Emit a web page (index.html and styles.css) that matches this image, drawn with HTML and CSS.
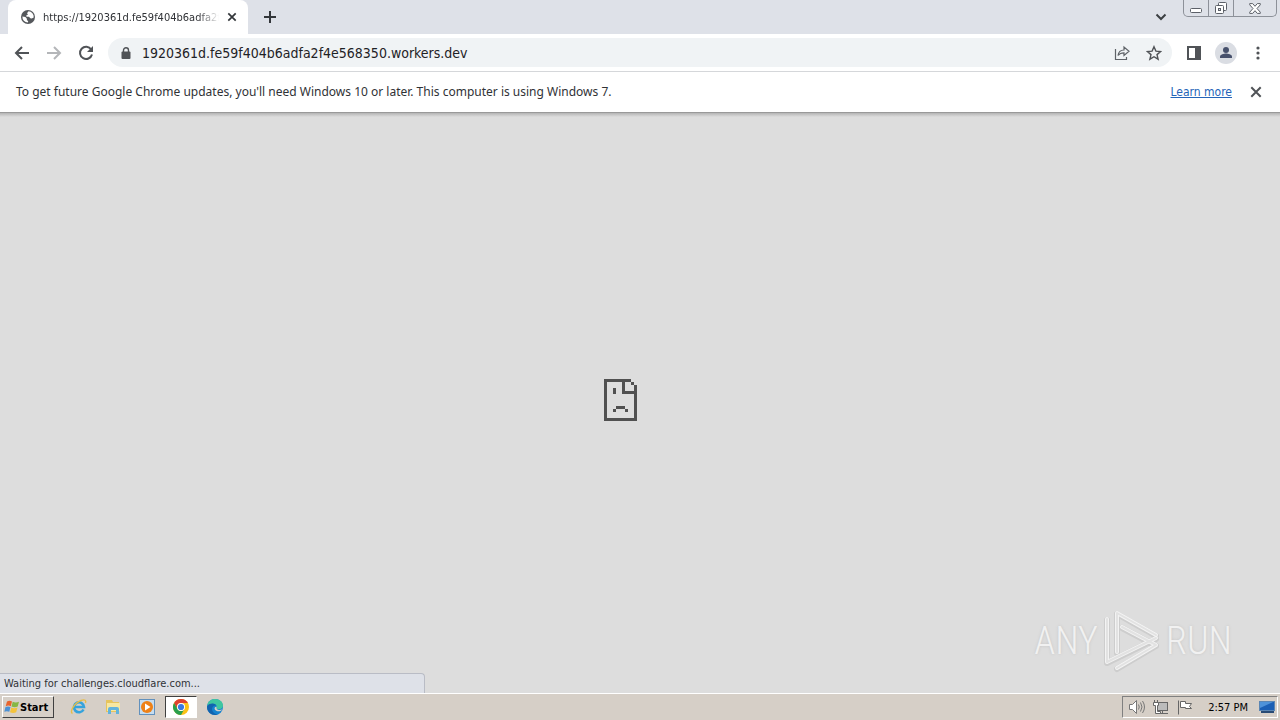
FILE: index.html
```html
<!DOCTYPE html>
<html lang="en">
<head>
<meta charset="utf-8">
<meta name="viewport" content="width=device-width, initial-scale=1">
<title>https://1920361d.fe59f404b6adfa2f4e568350.workers.dev</title>
<link rel="stylesheet" href="styles.css">
</head>
<body>
<div class="browser">
  <header class="tabstrip">
    <div class="tab">
      <svg class="globe" width="14" height="14" viewBox="0 0 14 14"><circle cx="7" cy="7" r="7" fill="#55585c"/><path d="M7.5 1.3 6 3.2l1 1.3-1.800 1 .3 1.300H8l1.300 1.400 1.500.2 1.900-.8A5.700 5.700 0 0 0 7.500 1.300zM1.400 6.500l3 .6 1.500 1.700v1.400l1.300.8-.3 1.600A5.700 5.700 0 0 1 1.400 6.500z" fill="#fff"/></svg>
      <span class="tab-title">https://1920361d.fe59f404b6adfa2f</span>
      <button class="icon-btn tab-close" aria-label="Close tab"><svg width="10" height="10" viewBox="0 0 10 10"><path d="M1.300 1.300l7.400 7.400M8.700 1.300 1.300 8.700" stroke="#33363a" stroke-width="1.700"/></svg></button>
    </div>
    <button class="icon-btn new-tab" aria-label="New tab"><svg width="12" height="12" viewBox="0 0 12 12"><path d="M6 0v12M0 6h12" stroke="#33363a" stroke-width="2"/></svg></button>
    <button class="icon-btn tab-search" aria-label="Search tabs"><svg width="12" height="8" viewBox="0 0 12 8"><path d="M1.500 1.500 6 6l4.500-4.500" fill="none" stroke="#3c4043" stroke-width="2"/></svg></button>
    <div class="caption">
      <button class="icon-btn cap-min" aria-label="Minimize"><svg width="12" height="5" viewBox="0 0 12 5"><rect x=".5" y=".5" width="11" height="4" rx="1" fill="#fff" stroke="#5c6068"/></svg></button>
      <button class="icon-btn cap-max" aria-label="Restore"><svg width="14" height="14" viewBox="0 0 14 14" stroke="#5c6068"><rect x="4.500" y="1.500" width="8" height="8" rx="1" fill="#fff"/><rect x="1.500" y="4.500" width="8" height="8" rx="1" fill="#fff"/><rect x="4.500" y="7.500" width="2" height="2" fill="#dee1e8"/></svg></button>
      <button class="icon-btn cap-close" aria-label="Close"><svg width="12" height="11" viewBox="0 0 12 11"><path d="M.7.600h3L6 3.300 8.300.600h3v1.200L8 5.500l3.300 3.700v1.200h-3L6 7.700l-2.300 2.700h-3V9.200L4 5.500.700 1.800z" fill="#fff" stroke="#5c6068"/></svg></button>
    </div>
  </header>

  <nav class="toolbar">
    <button class="icon-btn nav-btn" aria-label="Back"><svg width="16" height="16" viewBox="0 0 16 16"><path d="M15 8H2.500M8 2 2 8l6 6" fill="none" stroke="#505357" stroke-width="2"/></svg></button>
    <button class="icon-btn nav-btn" aria-label="Forward" disabled><svg width="16" height="16" viewBox="0 0 16 16"><path d="M1 8h12.500M8 2l6 6-6 6" fill="none" stroke="#b4b6b9" stroke-width="2"/></svg></button>
    <button class="icon-btn nav-btn" aria-label="Reload"><svg width="16" height="16" viewBox="0 0 16 16"><path d="M13.200 4.500A6.100 6.100 0 1 0 14 9.500" fill="none" stroke="#505357" stroke-width="2"/><path d="M15 1v6H9z" fill="#505357"/></svg></button>
    <div class="omnibox">
      <svg class="lock" width="10" height="12" viewBox="0 0 10 12"><path d="M2.500 5V3.300a2.500 2.500 0 0 1 5 0V5" fill="none" stroke="#505357" stroke-width="1.400"/><rect x=".5" y="4.500" width="9" height="7.500" rx="1" fill="#505357"/></svg>
      <input class="url" type="text" aria-label="Address" value="1920361d.fe59f404b6adfa2f4e568350.workers.dev">
      <button class="icon-btn nav-btn" aria-label="Share"><svg width="16" height="16" viewBox="0 0 16 16" fill="none" stroke="#5f6368" stroke-width="1.200"><path d="M1.500 4v10.500h11V12"/><path d="M4 10.500C4.500 7 6.500 5 10 5V2l5 4.300-5 4.200V7.800C7.500 7.800 5.500 8.500 4 10.500z"/></svg></button>
      <button class="icon-btn nav-btn" aria-label="Bookmark"><svg width="16" height="16" viewBox="0 0 16 16"><path d="m8 1.700 1.900 4.400 4.700.4L11 9.600l1.100 4.600L8 11.700l-4.100 2.500L5 9.600 1.400 6.500l4.700-.4z" fill="none" stroke="#505357" stroke-width="1.400"/></svg></button>
    </div>
    <button class="icon-btn nav-btn" aria-label="Side panel"><svg width="14" height="14" viewBox="0 0 14 14"><rect x="1" y="1" width="12" height="12" fill="none" stroke="#505357" stroke-width="2"/><path d="M8 0h6v14H8z" fill="#505357"/></svg></button>
    <button class="icon-btn nav-btn" aria-label="Profile"><svg width="22" height="22" viewBox="0 0 22 22"><circle cx="11" cy="11" r="11" fill="#dadde3"/><circle cx="11" cy="8" r="3" fill="#47516c"/><path d="M5 16v-1.500c0-2 4-3 6-3s6 1 6 3V16z" fill="#47516c"/></svg></button>
    <button class="icon-btn nav-btn" aria-label="Menu"><svg width="4" height="14" viewBox="0 0 4 14" fill="#505357"><circle cx="2" cy="2" r="1.600"/><circle cx="2" cy="7" r="1.600"/><circle cx="2" cy="12" r="1.600"/></svg></button>
  </nav>

  <div class="infobar">
    <span class="info-text">To get future Google Chrome updates, you'll need Windows 10 or later. This computer is using Windows 7.</span>
    <a class="learn" href="#">Learn more</a>
    <button class="icon-btn info-close" aria-label="Dismiss"><svg width="12" height="12" viewBox="0 0 12 12"><path d="m1.300 1.300 9.400 9.400M10.700 1.300l-9.400 9.400" stroke="#505357" stroke-width="2"/></svg></button>
  </div>

  <main class="page">
    <svg class="sad" width="33" height="42" viewBox="0 0 33 42" shape-rendering="crispEdges" fill="#505050"><path d="M0 0h27v3H3v36h27V15H18V0h3v12h9V6h3v36H0z"/><path d="M27 3h3v3h-3zM9 9h3v6H9zM12 27h9v3h-9zM9 30h3v3H9zM21 30h3v3h-3z"/></svg>
    <div class="watermark">
      <span class="mark-text">ANY</span>
      <svg width="60" height="64" viewBox="0 0 60 64" fill="none" stroke-linejoin="round" stroke-linecap="round">
        <g stroke="#cdcdcd" stroke-width="6"><path d="M15 44V5l39 22M5 11v43l49-24M20 19l34 18-39 23"/></g>
        <g stroke="#f3f3f3" stroke-width="4"><path d="M15 43V4l39 22M5 10v43l49-24M20 18l34 18-39 23"/></g>
        <g stroke="#e2e2e2" stroke-width="2"><path d="M15 43V4l39 22M5 10v43l49-24M20 18l34 18-39 23"/></g>
      </svg>
      <span class="mark-text">RUN</span>
    </div>
    <div class="status">Waiting for challenges.cloudflare.com...</div>
  </main>
</div>

<footer class="taskbar">
  <button class="start"><svg width="16" height="16" viewBox="0 0 16 16"><path d="M3 2.500Q5.500 1 8 2.500L6.800 7.200Q4.500 6 1.700 7.200z" fill="#e8642c"/><path d="M8.700 2.800q3 1.500 6.300 0l-1.300 4.700q-3 1.500-6.200 0z" fill="#86b744"/><path d="M1.500 8q2.500-1.200 5 0l-1.200 4.800q-2.500-1.300-5 0z" fill="#4c91d4"/><path d="M7.300 8.400q3 1.500 6.200 0l-1.300 4.800q-3 1.500-6.200 0z" fill="#f4c33c"/></svg>Start</button>
  <button class="task" aria-label="Internet Explorer"><svg width="18" height="18" viewBox="0 0 18 18"><path d="M13.500 11.500A5 5 0 1 1 14 9H5" fill="none" stroke="#35a3dc" stroke-width="2.600"/><path d="M2.500 15.500C-1 14 4.500 5 11 2.500c4-1.500 5.500 0 4.500 2.500" fill="none" stroke="#e6bd48" stroke-width="1.400"/></svg></button>
  <button class="task" aria-label="File Explorer"><svg width="18" height="18" viewBox="0 0 18 18"><path d="M2 2h6l1 2h6v10H2z" fill="#e6c45d"/><path d="M3 5h13v8H3z" fill="#f7e7a1"/><path d="M4 16v-5q0-2 2-2h7q2 0 2 2v5h-3v-4H7v4z" fill="#62b3dc"/></svg></button>
  <button class="task" aria-label="Media Player"><svg width="18" height="18" viewBox="0 0 18 18"><rect x="1.500" y="1.500" width="15" height="15" fill="#c6ddf0" stroke="#6291bd"/><circle cx="9" cy="9" r="6" fill="#ee8117"/><path d="m7 5.500 5.500 3.500L7 12.500z" fill="#fff"/></svg></button>
  <button class="task task-active" aria-label="Google Chrome"><svg width="16" height="16" viewBox="0 0 16 16"><circle cx="8" cy="8" r="8" fill="#fbc116"/><path d="M1.070 4A8 8 0 0 1 14.930 4H8a4 4 0 0 0-3.460 6z" fill="#df4131"/><path d="M1.070 4A8 8 0 0 0 8 16l3.460-6A4 4 0 0 1 4.540 10z" fill="#299f4d"/><circle cx="8" cy="8" r="4" fill="#fff"/><circle cx="8" cy="8" r="3.100" fill="#3979e2"/></svg></button>
  <button class="task" aria-label="Microsoft Edge"><svg width="18" height="18" viewBox="0 0 18 18"><circle cx="9" cy="9" r="8" fill="#1582cf"/><path d="M1.200 8C2 3 5 1 9 1c5 0 8 3 8 6.500 0 2.500-2 3.700-4 3.700-2.500 0-3-.8-2.200-2C11.500 6.500 6 3.500 1.200 8z" fill="#3fc6a0"/><path d="M1.200 8C4 4.500 9 5 10.500 7.500 7 7 5 10 6.500 13c1 2.200 3.500 3.500 5.500 3.400C7 18.500 0 14.500 1.200 8z" fill="#1263ae"/><path d="M10.800 8.700c-1.300 2.300 1.500 4 5.400 2.800-1 2-5 2.500-7 .5-1.300-1.500-.5-3.500 1.600-3.300z" fill="#d6cfc7"/></svg></button>
  <div class="tray">
    <svg width="18" height="16" viewBox="0 0 18 16" fill="#fff" stroke="#777"><path d="M1.500 5.500h3l4-4v13l-4-4h-3z"/><path d="M10.500 5.500q1.500 2.500 0 5M12.500 3.500q3 4.500 0 9M14.500 2q4 6 0 12" fill="none"/></svg>
    <svg width="18" height="16" viewBox="0 0 18 16" stroke="#666"><rect x="5.500" y="3.500" width="10" height="8" fill="#bbb"/><path d="M6 14.500h10M10.500 12v2" /><path d="M1.500 3.500h5v3h-1v6h3v2h-5v-8h-2zM2.500 1v2M5.500 1v2" fill="#fff"/></svg>
    <svg width="18" height="16" viewBox="0 0 18 16" stroke="#666" fill="#fff"><path d="M2.500 1.500v14M4.500 2.500h5v2h6l-2 3 2 2h-6v-1h-5z"/></svg>
    <time class="clock">2:57 PM</time>
    <svg width="16" height="14" viewBox="0 0 16 14"><rect x=".5" y="1.500" width="15" height="9" fill="#1b5fb5" stroke="#5b86b4"/><path d="M1 2h13L1 8z" fill="#4e92d9"/><path d="M2 11h13v2H2z" fill="#294b75"/></svg>
  </div>
</footer>
</body>
</html>
```
FILE: styles.css
```css
* { box-sizing: border-box; }
body {
  margin: 0;
  min-height: 100vh;
  display: flex;
  flex-direction: column;
  font-family: "DejaVu Sans Condensed", "DejaVu Sans", sans-serif;
  font-size: 12px;
  color: #303236;
}
button { font: inherit; color: inherit; }
svg { display: block; flex: none; }
.browser { flex: 1; display: flex; flex-direction: column; }
.icon-btn {
  display: flex;
  align-items: center;
  justify-content: center;
  padding: 0;
  border: 0;
  background: none;
}

.tabstrip { display: flex; height: 34px; padding-left: 8px; background: #dee1e8; }
.tab {
  display: flex;
  align-items: center;
  width: 240px;
  padding: 0 10px 0 13px;
  border-radius: 8px 8px 0 0;
  background: #fff;
}
.tab-title {
  flex: 1;
  min-width: 0;
  margin: 0 7px 0 8px;
  overflow: hidden;
  white-space: nowrap;
  font-size: 11px;
  mask-image: linear-gradient(to right, #000 88%, transparent);
}
.tab-close { width: 12px; height: 16px; }
.new-tab { width: 28px; margin-left: 8px; }
.tab-search { width: 28px; margin-left: auto; }
.caption {
  display: flex;
  height: 17px;
  margin: 0 3px 0 8px;
  border: 1px solid #8d9199;
  border-top: 0;
  border-radius: 0 0 5px 5px;
}
.cap-min { width: 25px; padding-top: 5px; border-right: 1px solid #8d9199; }
.cap-max { width: 25px; border-right: 1px solid #8d9199; }
.cap-close { width: 42px; }

.toolbar {
  display: flex;
  align-items: center;
  height: 38px;
  padding: 0 6px;
  border-bottom: 1px solid #d5d7da;
  background: #fff;
}
.nav-btn { width: 32px; height: 28px; }
.omnibox {
  flex: 1;
  display: flex;
  align-items: center;
  height: 29px;
  margin: 0 6px;
  padding: 0 2px 0 13px;
  border-radius: 15px;
  background: #f0f3f5;
}
.url {
  flex: 1;
  min-width: 0;
  margin-left: 11px;
  padding: 0;
  border: 0;
  outline: 0;
  background: none;
  font: inherit;
  font-size: 14px;
  color: #1f2226;
}

.infobar {
  display: flex;
  align-items: center;
  height: 41px;
  padding: 0 16px;
  border-bottom: 1px solid #999;
  background: #fff;
}
.info-text { font-family: "Noto Sans", sans-serif; line-height: 16px; }
.learn { margin-left: auto; color: #2464b8; }
.info-close { width: 16px; height: 16px; margin-left: 16px; }

.page {
  position: relative;
  flex: 1;
  display: flex;
  align-items: center;
  justify-content: center;
  padding: 0 39px 6px 0;
  background: linear-gradient(#b4b4b4, #ddd 4px);
}
.watermark {
  position: absolute;
  right: 48px;
  bottom: 20px;
  display: flex;
  align-items: center;
  gap: 4px;
}
.mark-text {
  font-family: "Roboto Condensed", "Open Sans Condensed Light", "Open Sans Condensed", sans-serif;
  font-size: 38px;
  font-weight: 300;
  color: #f1f1f1;
  text-shadow: 0 0 3px #c4c4c4;
}
.status {
  position: absolute;
  left: 0;
  bottom: 0;
  width: 425px;
  height: 20px;
  padding-left: 4px;
  border: 1px solid #b9bcc5;
  border-width: 1px 1px 0 0;
  border-radius: 0 4px 0 0;
  background: #dee1e8;
  font-size: 11px;
  line-height: 19px;
}

.taskbar {
  display: flex;
  align-items: center;
  height: 27px;
  padding: 0 2px;
  border-top: 1px solid #fff;
  background: #d6cfc7;
  color: #000;
}
.start {
  display: flex;
  align-items: center;
  width: 52px;
  height: 22px;
  margin-right: 9px;
  padding: 0 1px;
  border: 1px solid;
  border-color: #fff #404040 #404040 #fff;
  background: #d6cfc7;
  font-size: 11px;
  font-weight: bold;
}
.task {
  display: flex;
  align-items: center;
  justify-content: center;
  width: 32px;
  height: 22px;
  margin-right: 2px;
  padding: 0;
  border: 0;
  background: none;
}
.task-active {
  border: 1px solid;
  border-color: #404040 #fff #fff #404040;
  background: #fff;
}
.tray {
  display: flex;
  align-items: center;
  gap: 6px;
  height: 22px;
  margin-left: auto;
  padding: 0 2px 0 5px;
  border: 1px solid;
  border-color: #808080 #fff #fff #808080;
}
.clock { margin: 0 5px 0 8px; font-size: 11px; }
```
